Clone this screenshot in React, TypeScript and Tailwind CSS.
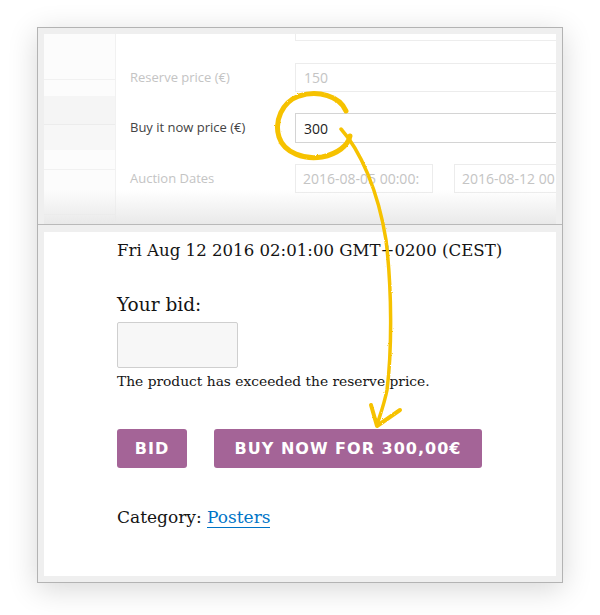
import React from "react";

const adminFont = { fontFamily: '"Open Sans", "Liberation Sans", sans-serif' };
const serif = { fontFamily: '"DejaVu Serif", "Liberation Serif", serif' };
const btnFont = { fontFamily: '"DejaVu Sans", "Liberation Sans", sans-serif' };

const AdminPanel = () => {
    return (
        <div className="relative flex h-[190px] overflow-hidden bg-white" style={adminFont}>
            {/* left menu strip */}
            <div className="flex w-[72px] shrink-0 flex-col border-r border-[#f1f1f1] bg-[#fcfcfc]">
                <div className="h-[46px] border-b border-[#f1f1f1]" />
                <div className="h-[16px]" />
                <div className="h-[29px] border-b border-[#ececec] bg-[#f5f5f5]" />
                <div className="h-[25px] bg-[#f7f7f7]" />
                <div className="h-[20px] border-b border-[#f1f1f1]" />
                <div className="h-[45px] border-b border-[#f1f1f1]" />
            </div>

            {/* fields */}
            <div className="flex-1 pl-[14px] text-[13px]">
                <div className="ml-[165px] h-[7px] border-x border-b border-[#ededed]" />
                <div className="mt-[22px] flex h-[29px] items-center">
                    <span className="w-[165px] text-[#c4c4c4]">Reserve price (€)</span>
                    <div className="flex h-full w-[300px] items-center border border-[#ececec] pl-[8px] text-[14px] text-[#c4c4c4]">
                        150
                    </div>
                </div>
                <div className="mt-[21px] flex h-[30px] items-center">
                    <span className="w-[165px] text-[#444]">Buy it now price (€)</span>
                    <div className="flex h-full w-[300px] items-center border border-[#d4d4d4] pl-[8px] text-[14px] text-[#222]">
                        300
                    </div>
                </div>
                <div className="mt-[21px] flex h-[29px] items-center">
                    <span className="w-[165px] text-[#c4c4c4]">Auction Dates</span>
                    <div className="flex h-full w-[138px] shrink-0 items-center border border-[#ececec] pl-[7px] text-[14px] whitespace-nowrap text-[#c4c4c4]">
                        2016-08-05 00:00:
                    </div>
                    <div className="ml-[21px] flex h-full w-[150px] shrink-0 items-center border border-[#ececec] pl-[7px] text-[14px] whitespace-nowrap text-[#c4c4c4]">
                        2016-08-12 00
                    </div>
                </div>
            </div>

            {/* faded bottom edge of the cropped screenshot */}
            <div className="pointer-events-none absolute inset-x-0 bottom-0 h-[34px] bg-gradient-to-b from-white/0 to-[#e9e9e9]" />
        </div>
    );
};

const ProductPanel = () => {
    return (
        <div className="h-[344px] bg-white pl-[73px] pt-[5px] text-[#141414]" style={serif}>
            <p className="text-[16.6px] leading-[27px]">Fri Aug 12 2016 02:01:00 GMT+0200 (CEST)</p>
            <p className="mt-[28px] text-[18.5px] leading-[26px]">Your bid:</p>
            <div className="mt-[4px] h-[46px] w-[121px] rounded-[2px] border border-[#cfcfcf] bg-[#f7f7f7]" />
            <p className="mt-[2px] text-[13.8px] leading-[22px]">The product has exceeded the reserve price.</p>
            <div className="mt-[37px] flex gap-[27px]" style={btnFont}>
                <button className="h-[39px] w-[70px] rounded-[3px] bg-[#a46497] text-[16px] font-bold tracking-[1px] text-white">
                    BID
                </button>
                <button className="h-[39px] w-[268px] rounded-[3px] bg-[#a46497] text-[16px] font-bold tracking-[1px] text-white">
                    BUY NOW FOR 300,00€
                </button>
            </div>
            <p className="mt-[36px] text-[17px] leading-[26px]">
                Category:{" "}
                <a className="border-b border-[#0074c7] text-[#0074c7]" href="#">
                    Posters
                </a>
            </p>
        </div>
    );
};

const Scribble = () => {
    return (
        <svg className="pointer-events-none absolute inset-0" width="600" height="615" viewBox="0 0 600 615">
            <defs>
                <filter id="crayon">
                    <feTurbulence type="fractalNoise" baseFrequency="0.9" numOctaves="2" result="n" />
                    <feDisplacementMap in="SourceGraphic" in2="n" scale="2" />
                </filter>
            </defs>
            <g fill="none" stroke="#f6c200" strokeLinecap="round" strokeLinejoin="round" filter="url(#crayon)">
                <path
                    d="M346 111 C340 96 318 90 299 96 C282 102 274 121 279 137 C284 153 305 160 322 157 C337 154 348 146 350 136"
                    strokeWidth="5"
                />
                <path
                    d="M341 129 C360 150 378 190 386 240 C392 290 392 350 387 390 C384 405 380 415 377 425"
                    strokeWidth="3.5"
                />
                <path d="M371 405 L377 426 L400 410" strokeWidth="4" />
            </g>
        </svg>
    );
};

export default function App() {
    return (
        <div className="relative h-[615px] w-[600px] bg-white">
            <div className="pl-[37px] pt-[27px]">
                <div className="w-[526px] border border-[#b3b3b3] bg-[#efefef] shadow-[0_6px_28px_rgba(0,0,0,0.16)]">
                    <div className="px-[6px] pt-[6px]">
                        <AdminPanel />
                    </div>
                    <div className="border-t border-[#b9b9b9] px-[6px] pb-[6px] pt-[7px]">
                        <ProductPanel />
                    </div>
                </div>
            </div>
            <Scribble />
        </div>
    );
}
